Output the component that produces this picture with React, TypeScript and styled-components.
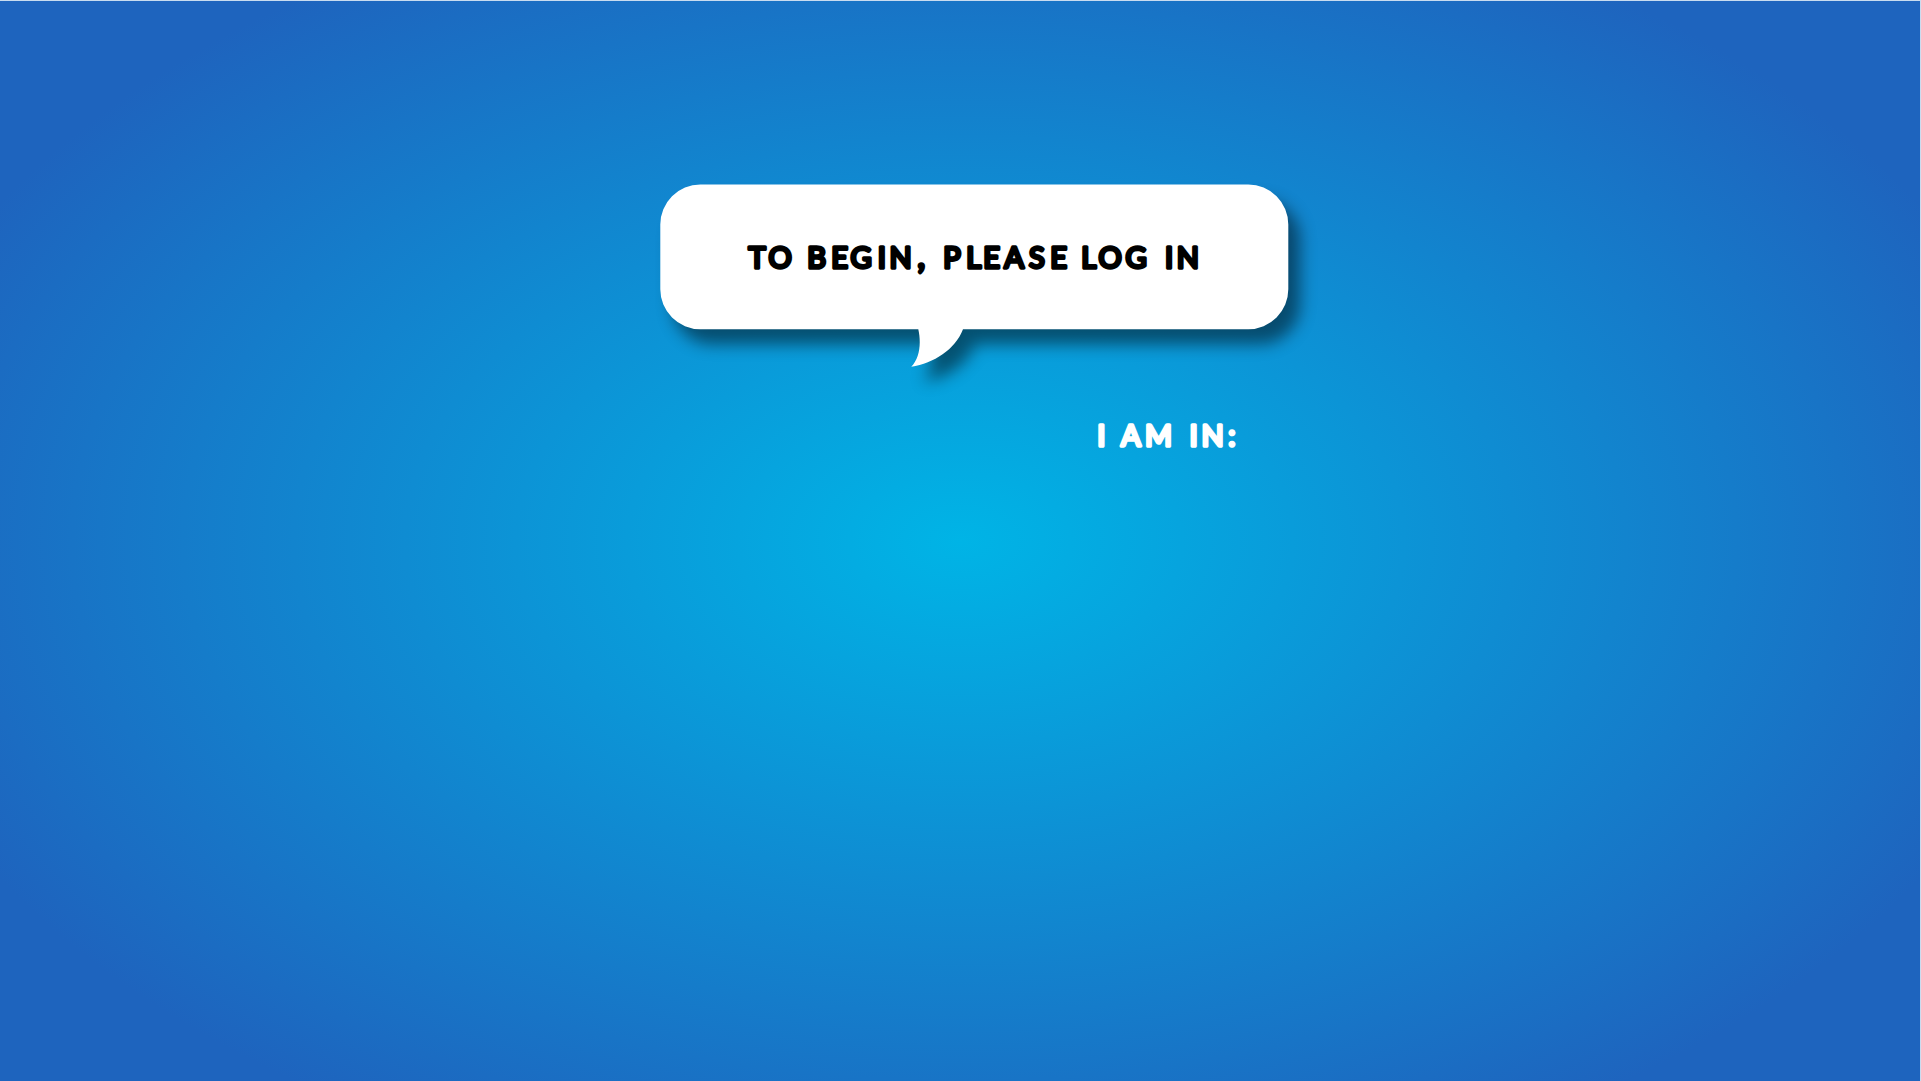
import React from "react";
import styled, { createGlobalStyle } from "styled-components";

const GlobalStyle = createGlobalStyle`
  body { margin: 0; background: #c9dcf0; }
`;

const Page = styled.main`
  box-sizing: border-box;
  height: 100vh;
  padding-top: 1px;
  overflow: hidden;
`;

const Backdrop = styled.div`
  box-sizing: border-box;
  width: calc(100% - 0.7px);
  height: 100%;
  padding-top: 163px;
  display: flex;
  flex-direction: column;
  align-items: flex-start;
  background: radial-gradient(ellipse 1110px 675px at 960px 540px, #00b4e6 0%, #1e64be 100%);
`;

const Bubble = styled.svg`
  display: block;
  margin-left: 640px;
  width: 680px;
  height: 240px;
  overflow: visible;
`;

const BubbleShape = styled.path`
  fill: #fff;
  filter: drop-shadow(12px 15px 8px rgba(0, 0, 0, 0.48));
`;

const Lettering = styled.text<{ $color: string }>`
  font-family: Lato, "Liberation Sans", sans-serif;
  font-weight: 400;
  font-size: 29px;
  fill: ${(p) => p.$color};
  stroke: ${(p) => p.$color};
  stroke-width: 3.4px;
  stroke-linejoin: round;
`;

const Comma = styled.tspan`
  font-style: italic;
  font-size: 34px;
`;

const Prompt = styled.svg`
  display: block;
  margin-left: 1090px;
  width: 160px;
  height: 60px;
`;

const titleX = "108.6 128.4 153 167.2 191.2 210.6 237.8 249.6 278.6 295 303.2 326.2 343.2 364.2 389 410.2 430 441.2 458.4 485.6 512 525 536.8";
const promptX = "7.3 20 31 55 85 99.4 111.4 138.2";

export default function App() {
  return (
    <>
      <GlobalStyle />
      <Page>
        <Backdrop>
          <Bubble viewBox="0 0 680 240">
            <BubbleShape d="M60.300 20.500h548a40 40 0 0 1 40 40v64.800a40 40 0 0 1-40 40H323C315 186 294 199 271.300 202.800C279.500 194 281.500 180 278.300 165.300H60.300a40 40 0 0 1-40-40V60.500a40 40 0 0 1 40-40Z" />
            <Lettering $color="#000" x={titleX} y="103.800">
              TO BEGIN<Comma>,</Comma> PLEASE LOG IN
            </Lettering>
          </Bubble>
          <Prompt viewBox="0 0 160 60">
            <Lettering $color="#fff" x={promptX} y="42.300">I AM IN:</Lettering>
          </Prompt>
        </Backdrop>
      </Page>
    </>
  );
}
